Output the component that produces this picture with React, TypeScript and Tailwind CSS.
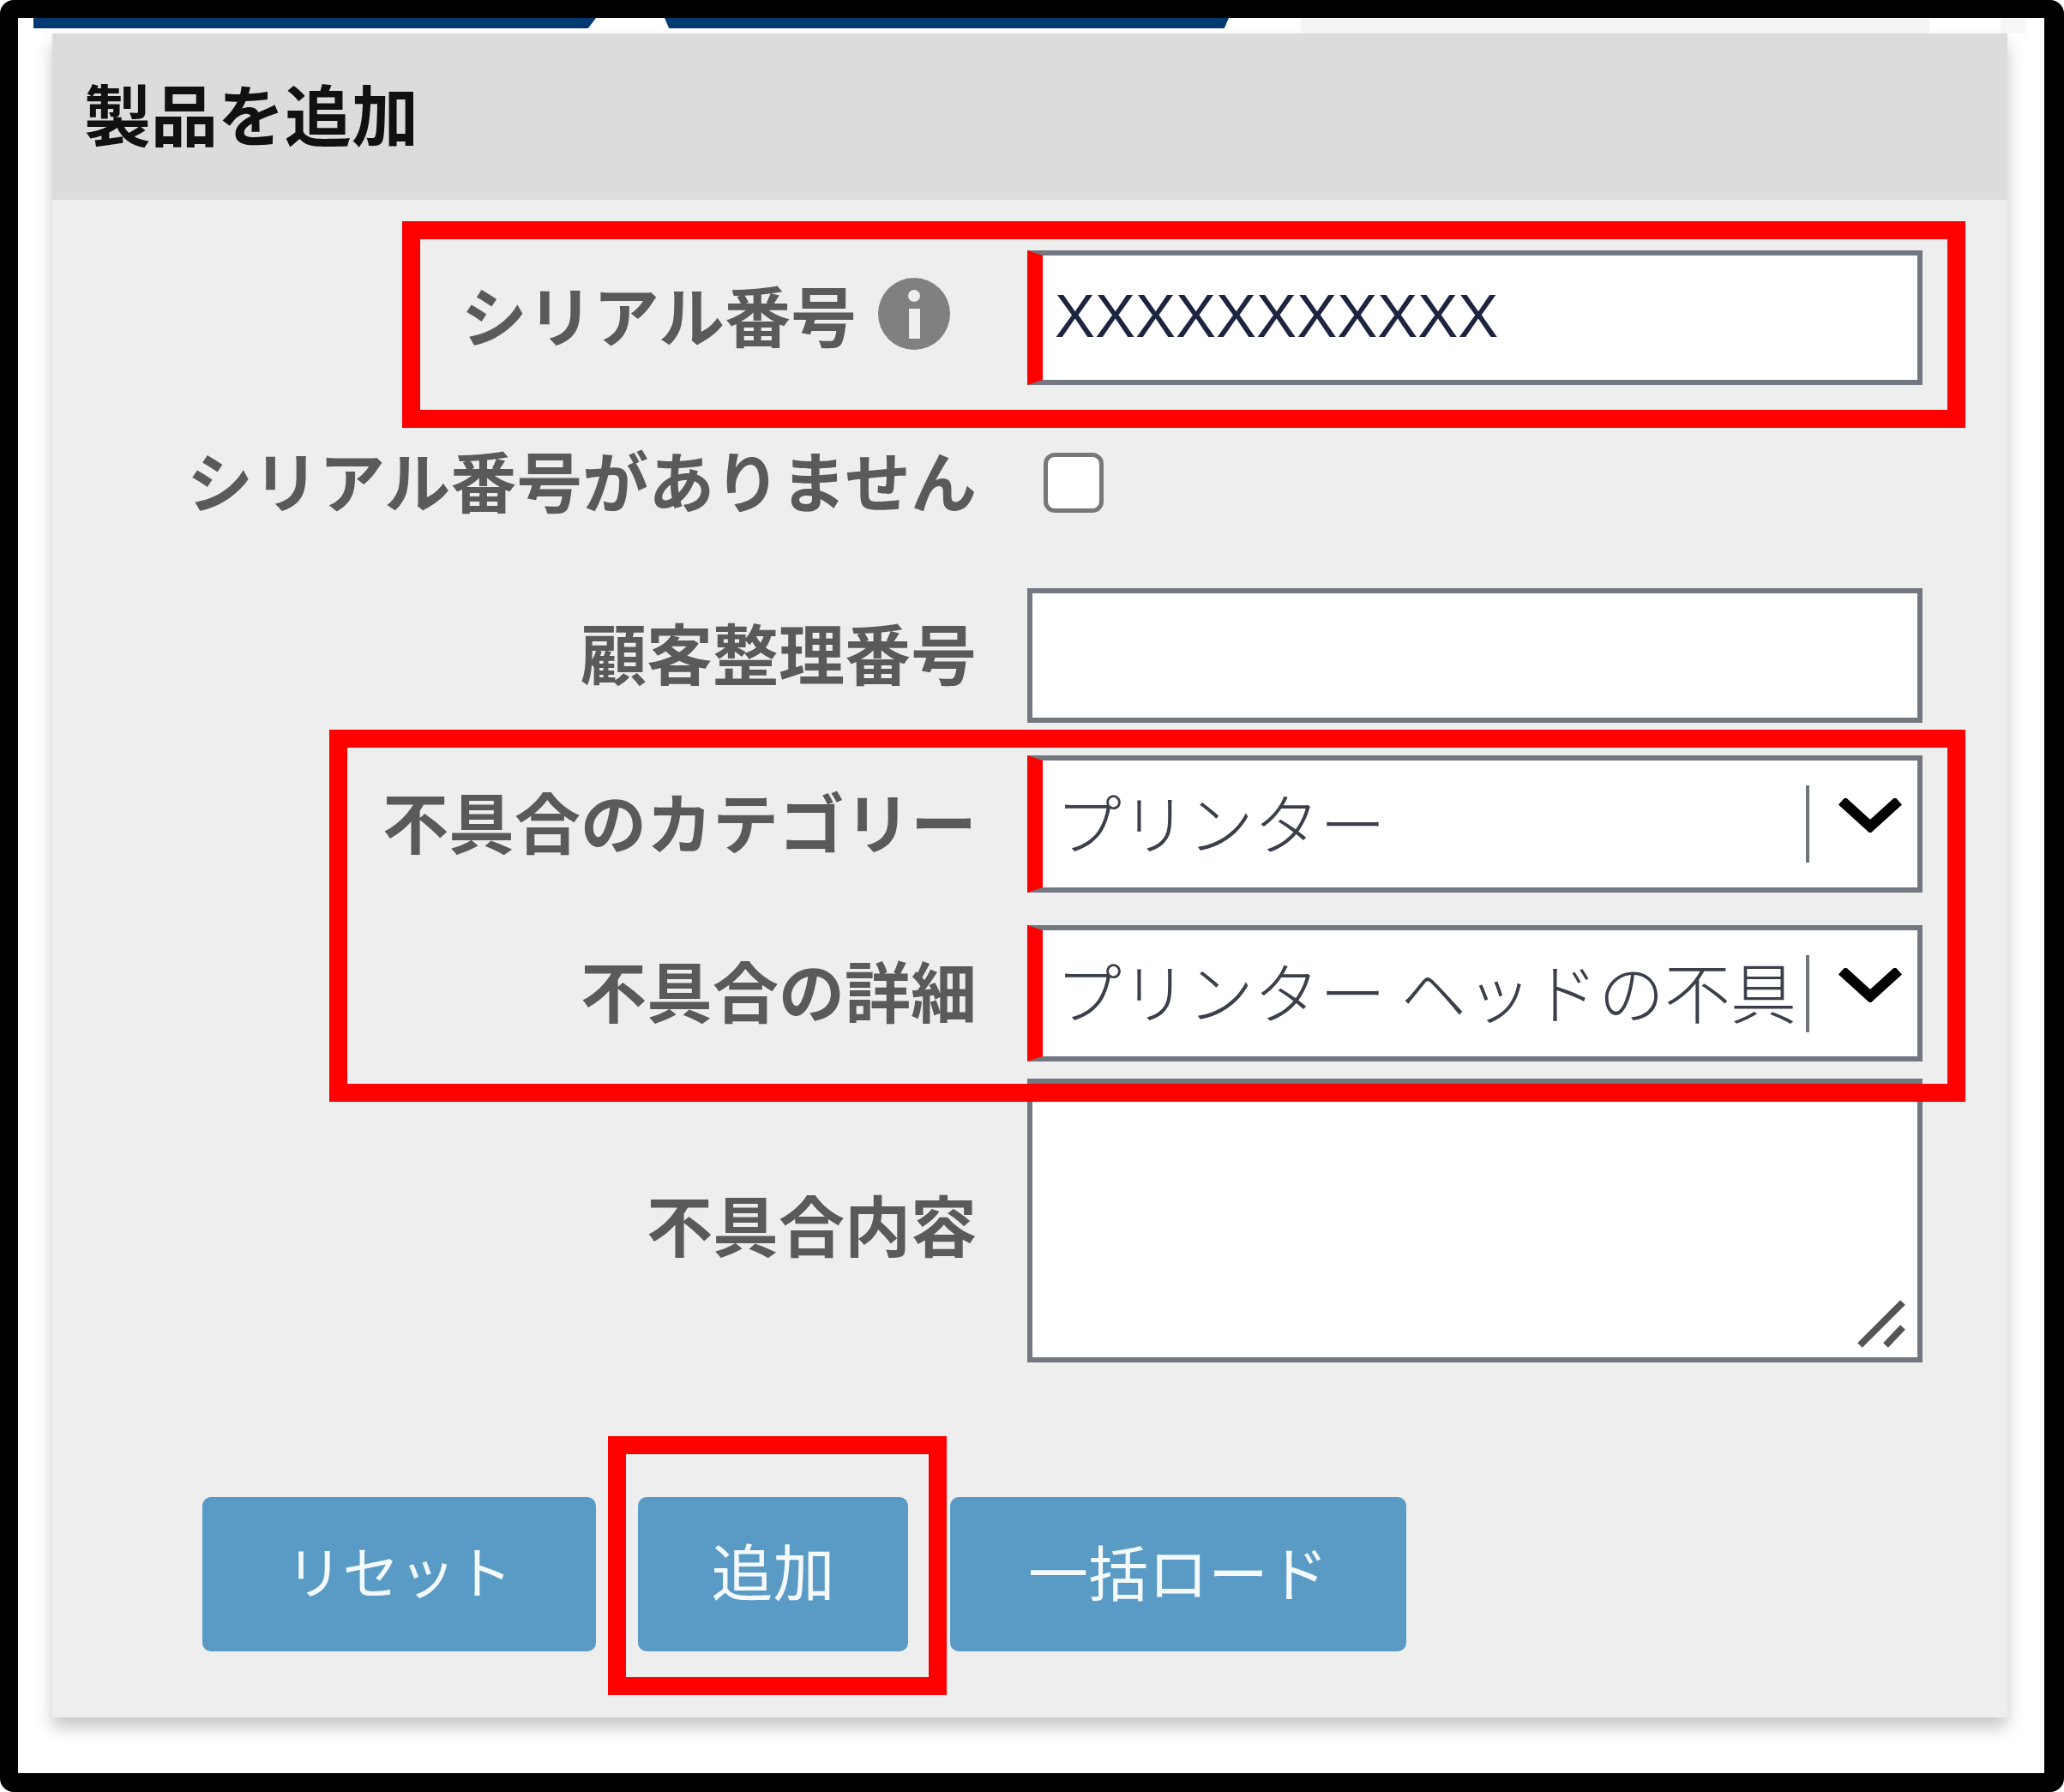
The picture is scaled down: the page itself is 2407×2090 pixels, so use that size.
import React from "react";

const font = "[font-family:'Noto_Sans_CJK_JP','Noto_Sans_CJK_SC',sans-serif]";

function Label({ children, className = "pb-[10px]" }: { children: React.ReactNode; className?: string }) {
  return (
    <div className={`w-[1078px] shrink-0 flex items-center justify-end text-[77px] leading-none font-semibold text-[#5a5a5a] whitespace-nowrap ${className}`}>
      {children}
    </div>
  );
}

function Select({ value, h }: { value: string; h: string }) {
  return (
    <div className={`w-[1044px] ${h} ml-[59px] bg-white border-[6px] border-[#737780] border-l-[18px] border-l-[#ff0000] flex items-center`}>
      <div className="w-[873px] ml-[15px] pb-[8px] whitespace-nowrap text-[77px] leading-none text-[#3a3f4a] font-light">
        {value}
      </div>
      <div className="ml-[2px] w-[4px] h-[90px] bg-[#6f737c] shrink-0" />
      <svg viewBox="0 0 78 40" className="w-[78px] h-[40px] ml-[32px] mb-[20px] shrink-0">
        <polyline points="6,3 39,33 72,3" fill="none" stroke="#000" strokeWidth="12" />
      </svg>
    </div>
  );
}

export default function App() {
  return (
    <div className={`relative w-[2407px] h-[2090px] bg-white border-t-[21px] border-l-[21px] border-r-[23px] border-b-[22px] border-black rounded-[16px] overflow-hidden ${font}`}>
      <div className="flex h-[18px]">
        <div className="ml-[18px] w-[656px] h-[12px] bg-[#003a70] [clip-path:polygon(0_0,100%_0,98.6%_100%,0_100%)]" />
        <div className="ml-[80px] w-[658px] h-[12px] bg-[#003a70] [clip-path:polygon(0_0,100%_0,99.2%_100%,0.8%_100%,0_0)]" />
        <div className="ml-[84px] w-[733px] h-[18px] bg-[#f4f4f4]" />
        <div className="ml-[83px] w-[30px] h-[18px] bg-[#f6f6f6]" />
      </div>

      <div className="ml-[40px] w-[2280px] h-[1964px] bg-[#eeeeee] shadow-[0_12px_18px_rgba(0,0,0,0.22)]">
        <div className="h-[194px] bg-[#dcdcdc] flex items-center pl-[37px] pb-[10px] text-[78px] leading-none font-bold text-[#111111]">
          製品を追加
        </div>

        <div className="flex mt-[59px] h-[157px]">
          <Label>
            シリアル番号
            <svg viewBox="0 0 84 84" className="w-[84px] h-[84px] ml-[25px] mr-[31px] shrink-0">
              <circle cx="42" cy="42" r="42" fill="#808080" />
              <circle cx="42" cy="21" r="7" fill="#eeeeee" />
              <rect x="36" y="36" width="13" height="35" fill="#eeeeee" />
            </svg>
          </Label>
          <div className="w-[1044px] ml-[59px] bg-white border-[6px] border-[#737780] border-l-[18px] border-l-[#ff0000] flex items-center pl-[14px] pb-[2px] text-[70.5px] leading-none text-[#1c2440] [font-family:'Liberation_Sans',sans-serif]">
            XXXXXXXXXXX
          </div>
        </div>

        <div className="flex mt-[79px] h-[70px]">
          <Label>シリアル番号がありません</Label>
          <div className="ml-[78px] w-[70px] h-[70px] bg-white border-[5px] border-[#777777] rounded-[13px]" />
        </div>

        <div className="flex mt-[88px] h-[157px]">
          <Label>顧客整理番号</Label>
          <div className="w-[1044px] ml-[59px] bg-white border-[6px] border-[#737780]" />
        </div>

        <div className="flex mt-[38px]">
          <Label>不具合のカテゴリー</Label>
          <Select value="プリンター" h="h-[160px]" />
        </div>

        <div className="flex mt-[38px]">
          <Label>不具合の詳細</Label>
          <Select value="プリンター ヘッドの不具" h="h-[159px]" />
        </div>

        <div className="flex mt-[20px] h-[331px]">
          <Label className="pt-[6px]">不具合内容</Label>
          <div className="relative w-[1044px] ml-[59px] bg-white border-[6px] border-[#737780]">
            <svg viewBox="0 0 60 60" className="absolute right-[11px] bottom-[9px] w-[60px] h-[60px]">
              <path d="M4 55 L54 5 M34 55 L54 34" stroke="#555555" strokeWidth="8" fill="none" />
            </svg>
          </div>
        </div>

        <div className="flex ml-[175px] mt-[157px] gap-[49px] text-[66px] leading-none text-[#f4f9fc]">
          <div className="w-[459px] h-[180px] pb-[12px] bg-[#5a9bc6] rounded-[10px] flex items-center justify-center">リセット</div>
          <div className="w-[315px] h-[180px] pb-[12px] bg-[#5a9bc6] rounded-[10px] flex items-center justify-center text-[72px]">追加</div>
          <div className="w-[532px] h-[180px] pb-[8px] bg-[#5a9bc6] rounded-[10px] flex items-center justify-center text-[70px]">一括ロード</div>
        </div>
      </div>

      <div className="absolute left-[448px] top-[237px] w-[1823px] h-[241px] border-[21px] border-[#ff0000]" />
      <div className="absolute left-[363px] top-[830px] w-[1908px] h-[434px] border-[21px] border-[#ff0000]" />
      <div className="absolute left-[688px] top-[1654px] w-[395px] h-[302px] border-[21px] border-[#ff0000]" />
    </div>
  );
}
